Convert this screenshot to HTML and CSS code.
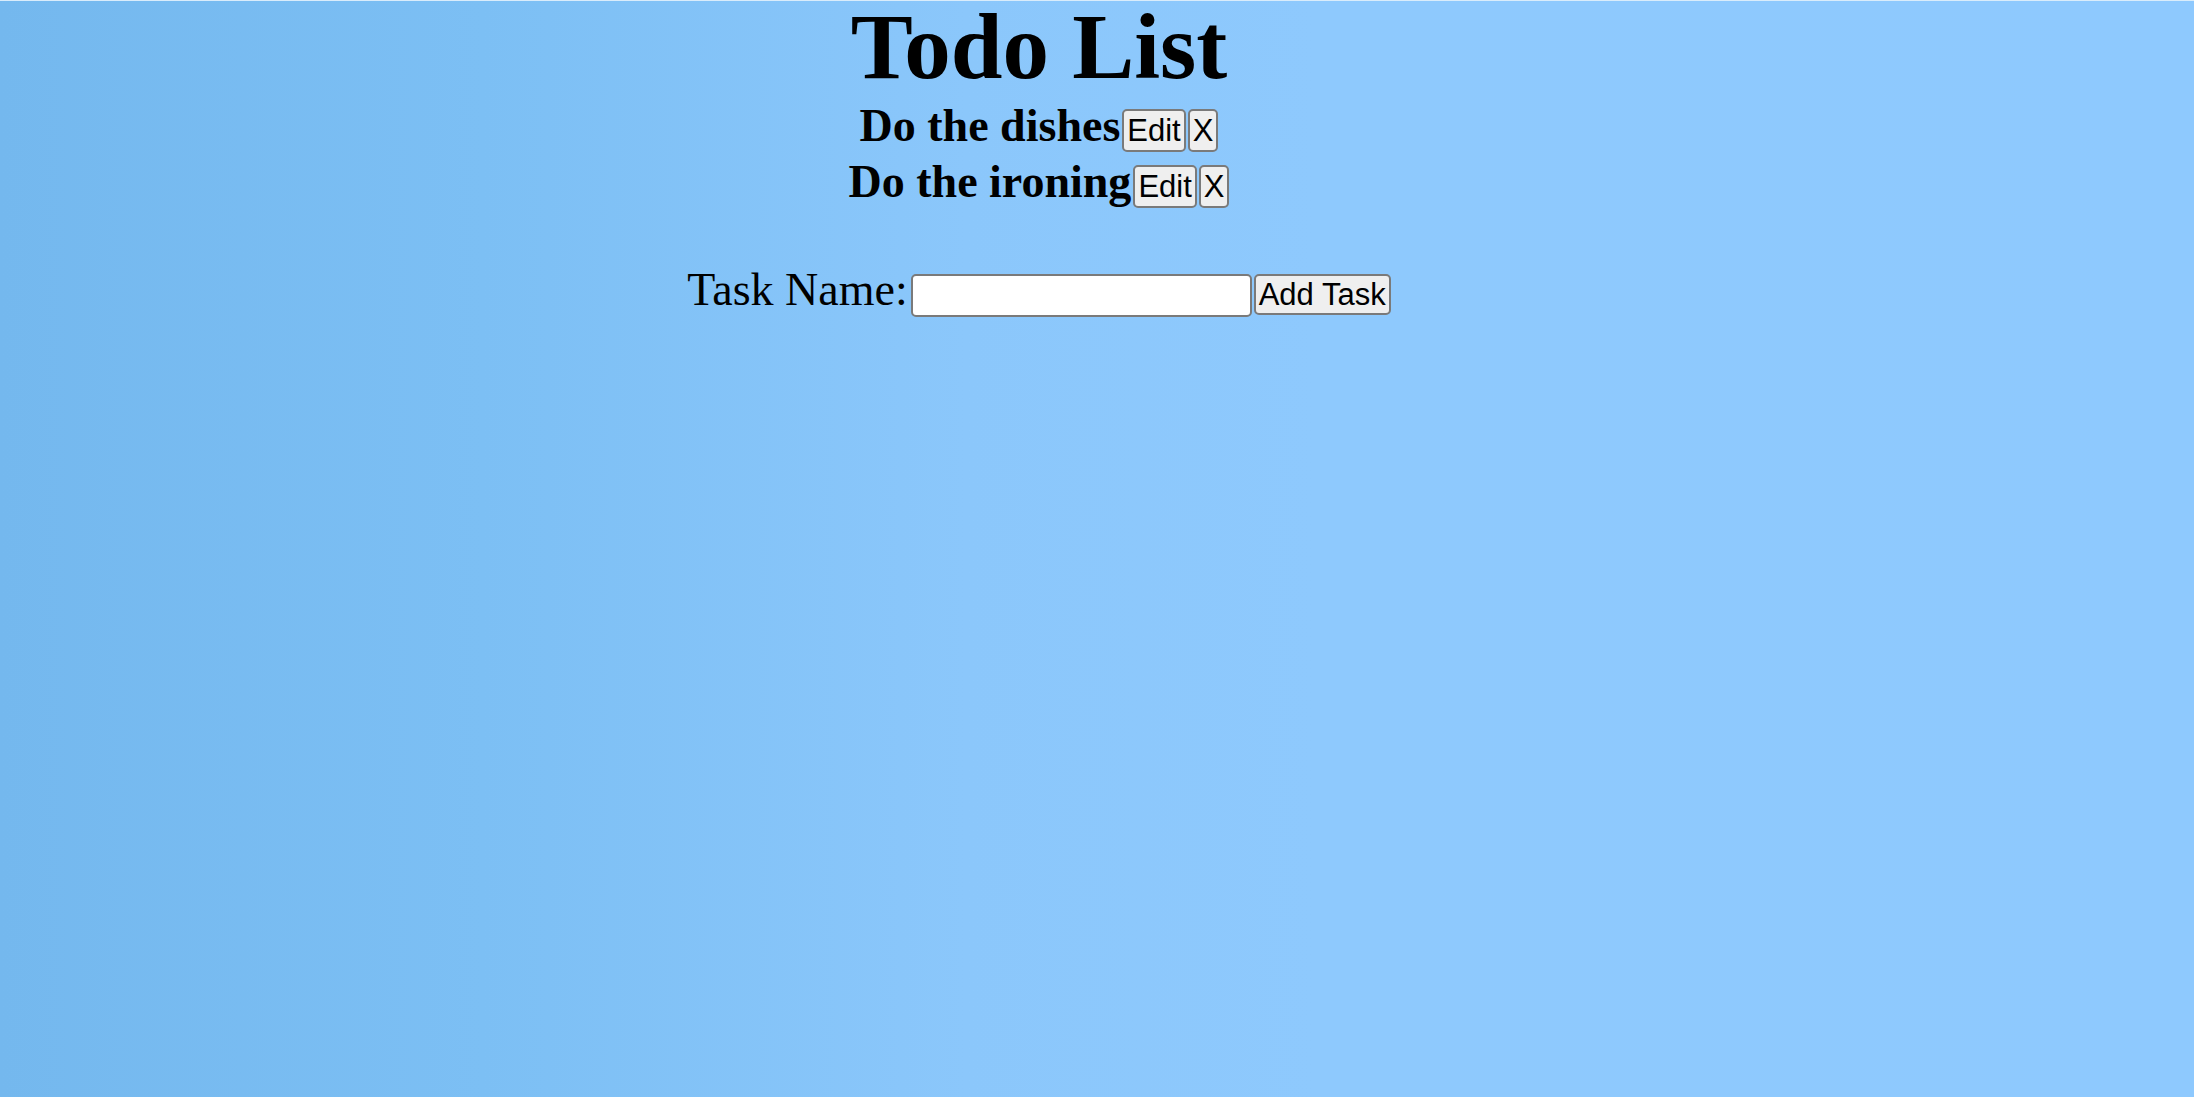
FILE: index.html
```html
<!DOCTYPE html>
<html lang="en">
<head>
<meta charset="utf-8">
<title>Todo List</title>
<link rel="stylesheet" href="styles.css">
</head>
<body>
<div class="app">
  <h1 class="title">Todo List</h1>
  <div class="tasks">
    <div class="task"><span class="task-name">Do the dishes</span><button class="btn btn-edit">Edit</button><button class="btn btn-del">X</button></div>
    <div class="task"><span class="task-name">Do the ironing</span><button class="btn btn-edit">Edit</button><button class="btn btn-del">X</button></div>
  </div>
  <form class="add-form">
    <label class="add-label" for="task">Task Name:</label><input class="add-input" id="task" type="text"><button class="btn btn-add" type="button">Add Task</button>
  </form>
</div>
</body>
</html>
```
FILE: styles.css
```css
html {
  min-height: 100%;
  background: linear-gradient(90deg, #74b8ee 0%, #7cbff4 22%, #8bc7fb 44%, #8ec9fd 60%, #8ec9fe 100%);
}
body {
  margin: 0;
  min-height: 1096px;
  border-top: 1px solid #d9ecfb;
  font-family: "Liberation Serif", "Times New Roman", serif;
  color: #000;
}
.app {
  padding-right: 116px;
  text-align: center;
}
.title {
  margin: 0;
  padding-top: 2px;
  font-size: 93px;
  line-height: 88px;
  font-weight: bold;
}
.tasks {
  margin-top: 7px;
}
.task {
  display: flex;
  justify-content: center;
  align-items: baseline;
  height: 56px;
}
.task-name {
  font-size: 46px;
  line-height: 56px;
  font-weight: bold;
}
.btn {
  font-family: "Liberation Sans", Arial, sans-serif;
  font-size: 31px;
  line-height: 35px;
  color: #000;
  background: #efefef;
  border: 2px solid #7a7a7a;
  border-radius: 5px;
  margin: 0 0 0 2px;
  padding: 2px 3px 2px;
}
.btn-del {
  padding: 2px 3px;
}
.add-form {
  display: flex;
  justify-content: center;
  align-items: baseline;
  margin: 52px 0 0;
}
.add-label {
  font-size: 46px;
  line-height: 56px;
}
.add-input {
  box-sizing: border-box;
  width: 341px;
  height: 43px;
  margin-left: 3px;
  padding: 2px 4px;
  font-family: "Liberation Sans", Arial, sans-serif;
  font-size: 30px;
  line-height: 34px;
  background: #fff;
  border: 2px solid #7a7a7a;
  border-radius: 5px;
}
.btn-add {
  margin-left: 2px;
  padding: 1px 3px;
}
```
